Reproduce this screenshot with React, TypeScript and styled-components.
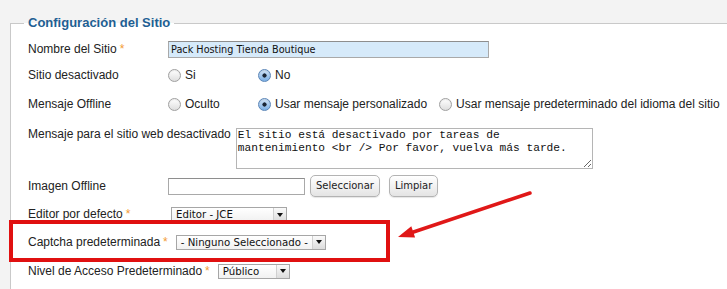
import React from 'react';
import styled, { createGlobalStyle } from 'styled-components';

const Global = createGlobalStyle`
  html, body { margin: 0; padding: 0; background: #f3f3f3; overflow: hidden; }
  body { font-family: "Liberation Sans", Arial, sans-serif; color: #222; }
`;

const Page = styled.div`
  position: relative;
  width: 727px;
  height: 289px;
  overflow: hidden;
  padding: 15px 0 0 10px;
  box-sizing: border-box;
`;

const Fieldset = styled.fieldset`
  margin: 0;
  padding: 6px 0 0 17px;
  border: 1px solid #c9c9c9;
  background: #fff;
  width: 760px;
  height: 330px;
  box-sizing: border-box;
  min-width: 0;
`;

const Legend = styled.legend`
  padding: 0 4px;
  margin-left: -4px;
  font: bold 13px/16px "Liberation Sans", Arial, sans-serif;
  color: #1f5f93;
`;

const Row = styled.div<{ $h: number; $top?: boolean }>`
  display: flex;
  align-items: ${(p) => (p.$top ? 'flex-start' : 'center')};
  height: ${(p) => p.$h}px;
  padding-top: ${(p) => (p.$top ? 8 : 0)}px;
  box-sizing: border-box;
`;

const Label = styled.div`
  min-width: 140px;
  box-sizing: border-box;
  padding-right: 5px;
  font-size: 12px;
  line-height: 15px;
  color: #222;
  white-space: nowrap;
`;

const Star = styled.span`
  color: #f39c34;
  margin-left: 3px;
`;

const TextInput = styled.input<{ $w: number; $tinted?: boolean }>`
  width: ${(p) => p.$w}px;
  height: 17px;
  box-sizing: border-box;
  margin: 0;
  padding: 0 2px;
  border: 1px solid #a9a9a9;
  border-top-color: #8e8e8e;
  background: ${(p) => (p.$tinted ? '#d6eafa' : '#fff')};
  font: 9.7px/15px "DejaVu Sans", Verdana, sans-serif;
  color: #111;
  outline: none;
`;

const RadioGroup = styled.div`
  display: flex;
  gap: 12px;
`;

const RadioOption = styled.label`
  display: inline-flex;
  align-items: center;
  gap: 4px;
  min-width: 78px;
  font-size: 12px;
  line-height: 15px;
  white-space: nowrap;
`;

const RadioDot = styled.span<{ $checked?: boolean }>`
  width: 13px;
  height: 13px;
  border-radius: 50%;
  box-sizing: border-box;
  border: 1px solid ${(p) => (p.$checked ? '#5b86b8' : '#a0a0a0')};
  background: ${(p) =>
    p.$checked
      ? 'radial-gradient(circle at 50% 50%, #1b2636 0 1.8px, transparent 2.4px), linear-gradient(#d2e4f7, #7cb0e6)'
      : 'linear-gradient(#ffffff, #dedede)'};
  box-shadow: inset 0 1px 1px rgba(0, 0, 0, 0.08);
`;

const TextArea = styled.textarea`
  width: 357px;
  height: 41px;
  box-sizing: border-box;
  margin: 1px 0 0 0;
  padding: 0 1px;
  border: 1px solid #b5b5b5;
  font: 11.2px/13px "Liberation Mono", "Courier New", monospace;
  color: #111;
  resize: both;
  overflow: hidden;
  outline: none;
`;

const Button = styled.button<{ $gap: number }>`
  height: 22px;
  padding: 0 5px;
  margin: 0 0 0 ${(p) => p.$gap}px;
  border: 1px solid #b3b3b3;
  border-radius: 5px;
  background: linear-gradient(#ffffff, #e4e4e4);
  font: 10px/20px "DejaVu Sans", Verdana, sans-serif;
  color: #222;
  box-shadow: 0 1px 1px rgba(0, 0, 0, 0.1);
`;

const Select = styled.div<{ $w: number }>`
  display: inline-flex;
  align-items: stretch;
  width: ${(p) => p.$w}px;
  height: 15px;
  box-sizing: border-box;
  margin-left: 3px;
  border: 1px solid #a6a6a6;
  background: linear-gradient(#ffffff, #f1f1f1);
  font: 10.2px/13px "DejaVu Sans", Verdana, sans-serif;
  color: #111;
`;

const SelectText = styled.span`
  flex: 1;
  padding-left: 4px;
  white-space: nowrap;
  overflow: hidden;
`;

const SelectArrow = styled.span`
  width: 12px;
  border-left: 1px solid #d0d0d0;
  display: flex;
  align-items: center;
  justify-content: center;
  background: linear-gradient(#fafafa, #dcdcdc);
  &::after {
    content: '';
    border-left: 3px solid transparent;
    border-right: 3px solid transparent;
    border-top: 4px solid #111;
  }
`;

const Highlight = styled.div`
  position: absolute;
  left: 9px;
  top: 220px;
  width: 381px;
  height: 42px;
  border: 4px solid #e01010;
  box-sizing: border-box;
  pointer-events: none;
`;

const Arrow = styled.svg`
  position: absolute;
  left: 390px;
  top: 185px;
  pointer-events: none;
`;

const Req = () => <Star>*</Star>;

export default function App() {
  return (
    <>
      <Global />
      <Page>
        <Fieldset>
          <Legend>Configuración del Sitio</Legend>
          <Row $h={24}>
            <Label>
              Nombre del Sitio<Req />
            </Label>
            <TextInput $w={321} $tinted defaultValue="Pack Hosting Tienda Boutique" />
          </Row>
          <Row $h={28}>
            <Label>Sitio desactivado</Label>
            <RadioGroup>
              <RadioOption>
                <RadioDot />
                Si
              </RadioOption>
              <RadioOption>
                <RadioDot $checked />
                No
              </RadioOption>
            </RadioGroup>
          </Row>
          <Row $h={30}>
            <Label>Mensaje Offline</Label>
            <RadioGroup>
              <RadioOption>
                <RadioDot />
                Oculto
              </RadioOption>
              <RadioOption>
                <RadioDot $checked />
                Usar mensaje personalizado
              </RadioOption>
              <RadioOption>
                <RadioDot />
                Usar mensaje predeterminado del idioma del sitio
              </RadioOption>
            </RadioGroup>
          </Row>
          <Row $h={53} $top>
            <Label>Mensaje para el sitio web desactivado</Label>
            <TextArea
              defaultValue="El sitio está desactivado por tareas de mantenimiento <br /> Por favor, vuelva más tarde."
            />
          </Row>
          <Row $h={28}>
            <Label>Imagen Offline</Label>
            <TextInput $w={137} defaultValue="" />
            <Button $gap={5}>Seleccionar</Button>
            <Button $gap={9}>Limpiar</Button>
          </Row>
          <Row $h={29}>
            <Label>
              Editor por defecto<Req />
            </Label>
            <Select $w={116}>
              <SelectText>Editor - JCE</SelectText>
              <SelectArrow />
            </Select>
          </Row>
          <Row $h={26}>
            <Label>
              Captcha predeterminada<Req />
            </Label>
            <Select $w={150}>
              <SelectText>- Ninguno Seleccionado -</SelectText>
              <SelectArrow />
            </Select>
          </Row>
          <Row $h={32}>
            <Label>
              Nivel de Acceso Predeterminado<Req />
            </Label>
            <Select $w={72}>
              <SelectText>Público</SelectText>
              <SelectArrow />
            </Select>
          </Row>
        </Fieldset>
        <Highlight />
        <Arrow width="150" height="60" viewBox="0 0 150 60">
          <line x1="140" y1="8" x2="22" y2="47.5" stroke="#e01818" strokeWidth="3.5" strokeLinecap="round" />
          <polygon points="8,52 21.3,41.2 25.1,52.6" fill="#e01818" />
        </Arrow>
      </Page>
    </>
  );
}
